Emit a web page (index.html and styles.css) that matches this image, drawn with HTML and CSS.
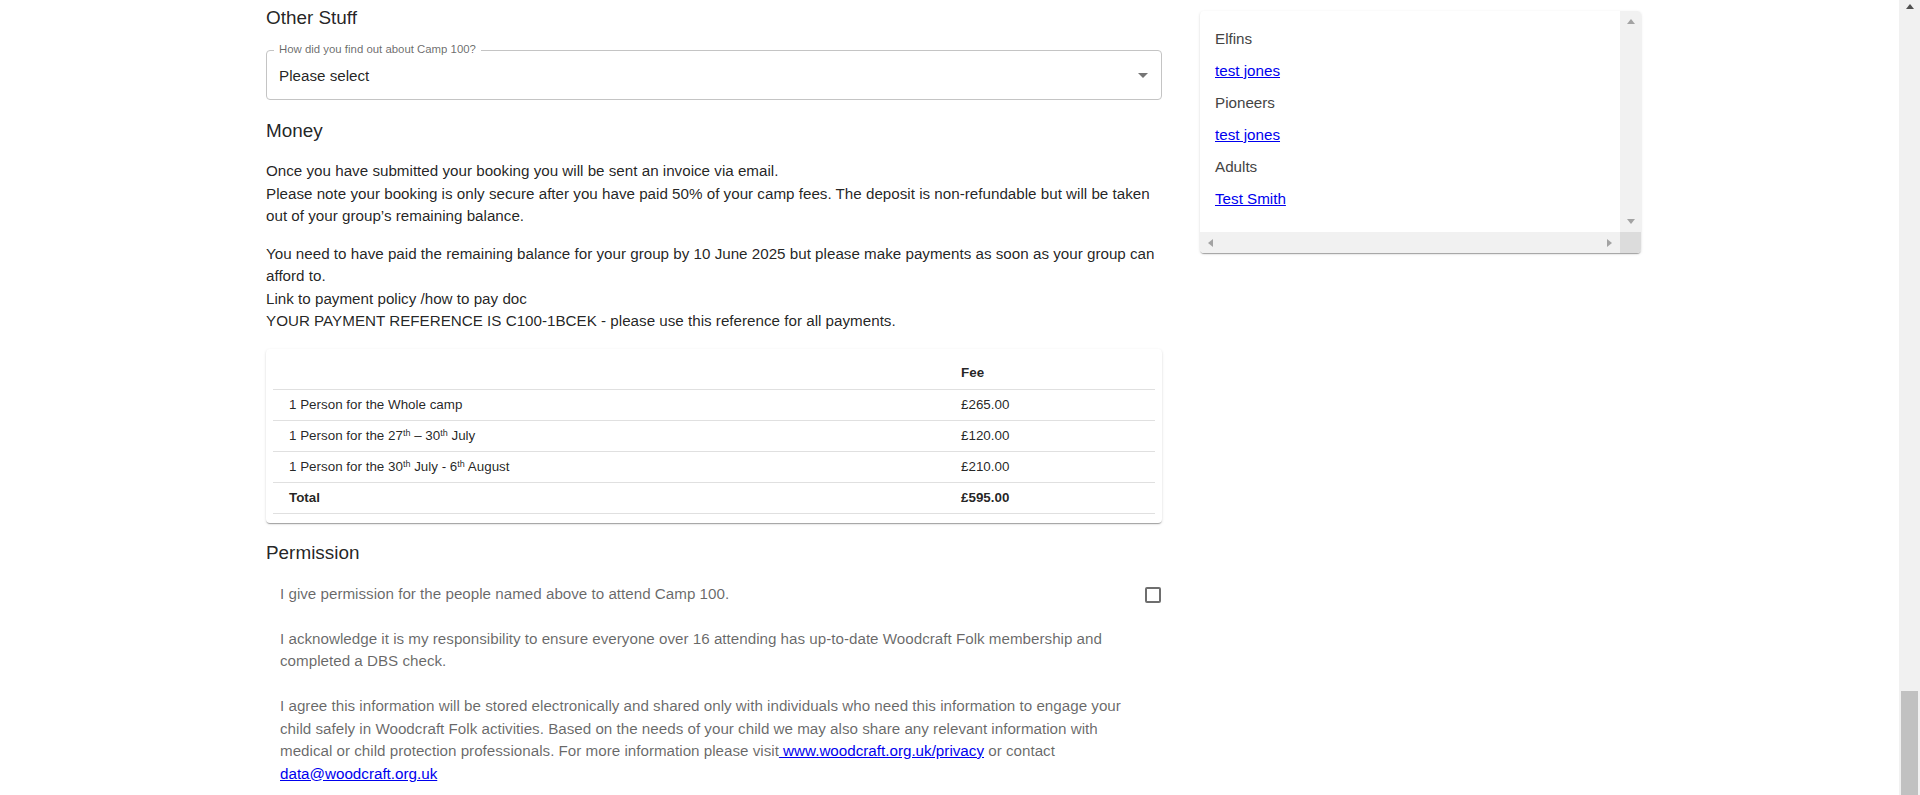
FILE: index.html
```html
<!DOCTYPE html>
<html lang="en">
<head>
<meta charset="utf-8">
<title>Camp 100 booking</title>
<link rel="stylesheet" href="styles.css">
</head>
<body>
<div class="page">
  <div class="viewport">
    <div class="layout">
      <main class="col-main">
        <h6 class="heading h-other">Other Stuff</h6>
        <div class="field">
          <span class="field-label">How did you find out about Camp 100?</span>
          <span class="field-value">Please select</span>
          <span class="field-arrow"></span>
        </div>

        <h6 class="heading h-money">Money</h6>
        <p class="text p1">Once you have submitted your booking you will be sent an invoice via email.<br>Please note your booking is only secure after you have paid 50% of your camp fees. The deposit is non-refundable but will be taken out of your group’s remaining balance.</p>
        <p class="text p2">You need to have paid the remaining balance for your group by 10 June 2025 but please make payments as soon as your group can afford to.<br>Link to payment policy /how to pay doc<br>YOUR PAYMENT REFERENCE IS C100-1BCEK - please use this reference for all payments.</p>

        <div class="card">
          <table class="fees">
            <colgroup><col><col class="col-fee"></colgroup>
            <thead>
              <tr><th></th><th>Fee</th></tr>
            </thead>
            <tbody>
              <tr><td>1 Person for the Whole camp</td><td>£265.00</td></tr>
              <tr><td>1 Person for the 27<sup>th</sup> – 30<sup>th</sup> July</td><td>£120.00</td></tr>
              <tr><td>1 Person for the 30<sup>th</sup> July - 6<sup>th</sup> August</td><td>£210.00</td></tr>
              <tr class="total"><td>Total</td><td>£595.00</td></tr>
            </tbody>
          </table>
        </div>

        <h6 class="heading h-perm">Permission</h6>
        <div class="perm">
          <div class="perm-text">
            <p>I give permission for the people named above to attend Camp 100.</p>
            <p>I acknowledge it is my responsibility to ensure everyone over 16 attending has up-to-date Woodcraft Folk membership and completed a DBS check.</p>
            <p>I agree this information will be stored electronically and shared only with individuals who need this information to engage your child safely in Woodcraft Folk activities. Based on the needs of your child we may also share any relevant information with medical or child protection professionals. For more information please visit<a href="#"> www.woodcraft.org.uk/privacy</a> or contact <a href="#">data@woodcraft.org.uk</a></p>
          </div>
          <div class="perm-check"><span class="checkbox"></span></div>
        </div>
      </main>

      <aside class="col-side">
        <div class="panel">
          <div class="panel-body">
            <div class="panel-content">
              <p class="group">Elfins</p>
              <p><a href="#">test jones</a></p>
              <p class="group">Pioneers</p>
              <p><a href="#">test jones</a></p>
              <p class="group">Adults</p>
              <p><a href="#">Test Smith</a></p>
            </div>
            <div class="vbar">
              <span class="sb-btn"><span class="tri tri-up"></span></span>
              <span class="sb-btn"><span class="tri tri-down"></span></span>
            </div>
          </div>
          <div class="hrow">
            <div class="hbar">
              <span class="sb-btn"><span class="tri tri-left"></span></span>
              <span class="sb-btn"><span class="tri tri-right"></span></span>
            </div>
            <div class="corner"></div>
          </div>
        </div>
      </aside>
    </div>
  </div>
  <div class="page-scroll">
    <span class="ps-up"></span>
    <span class="ps-track"></span>
    <span class="ps-thumb"></span>
  </div>
</div>
</body>
</html>
```

FILE: styles.css
```css
* { box-sizing: border-box; }
html, body { margin: 0; height: 100%; overflow: hidden; }
body {
  font-family: "Liberation Sans", Arial, sans-serif;
  background: #fff;
  color: rgba(0, 0, 0, 0.87);
}
.page { display: flex; height: 795px; }
.viewport { flex: 1; overflow: hidden; }
.layout {
  display: flex;
  align-items: flex-start;
  gap: 38px;
  padding-left: 266px;
}
.col-main { width: 896px; flex: none; }
.col-side { width: 441px; flex: none; padding-top: 11px; }

.heading {
  font-size: 18.9px;
  line-height: 30px;
  font-weight: 400;
  margin: 0;
}
.h-other { margin-top: 3px; }
.h-money { margin-top: 16px; }
.h-perm { margin-top: 14.5px; }

.field {
  position: relative;
  margin-top: 17px;
  height: 50px;
  border: 1px solid #c4c4c4;
  border-radius: 4px;
  display: flex;
  align-items: center;
  justify-content: space-between;
  padding: 1px 13px 0 12px;
}
.field-label {
  position: absolute;
  left: 7px;
  top: -8px;
  padding: 0 5px;
  font-size: 11.4px;
  line-height: 13px;
  background: #fff;
  color: rgba(0, 0, 0, 0.6);
}
.field-value { font-size: 15.2px; line-height: 17px; }
.field-arrow {
  width: 0;
  height: 0;
  border-left: 5px solid transparent;
  border-right: 5px solid transparent;
  border-top: 5px solid #757575;
}

.text { font-size: 15.2px; line-height: 22.5px; margin: 0; }
.p1 { margin-top: 14px; }
.p2 { margin-top: 15px; }

.card {
  margin-top: 16.5px;
  background: #fff;
  border-radius: 4px;
  padding: 8px 7px 9px;
  box-shadow: 0 2px 1px -1px rgba(0,0,0,0.2), 0 1px 1px 0 rgba(0,0,0,0.14), 0 1px 3px 0 rgba(0,0,0,0.12);
}
.fees {
  width: 100%;
  border-collapse: collapse;
  font-size: 13.4px;
  color: rgba(0, 0, 0, 0.87);
}
.col-fee { width: 210px; }
.fees th, .fees td {
  text-align: left;
  padding: 6px 16px;
  border-bottom: 1px solid #e0e0e0;
  line-height: 18px;
}
.fees th { font-weight: 700; line-height: 20px; }
.fees sup { font-size: 9px; line-height: 0; vertical-align: 4px; }
.total td { font-weight: 700; }

.perm {
  margin-top: 15px;
  display: flex;
  align-items: flex-start;
  padding-left: 14px;
}
.perm-text {
  flex: 1;
  font-size: 15.2px;
  line-height: 22.5px;
  color: rgba(0, 0, 0, 0.6);
}
.perm-text p { margin: 0 0 22.5px; }
.perm-text p:last-child { margin-bottom: 0; }
.perm-text a { color: #0000ee; }
.perm-check { width: 29px; flex: none; padding: 4.5px 0 0 12px; }
.checkbox {
  display: block;
  width: 16px;
  height: 16px;
  border: 2px solid #6e6e6e;
  border-radius: 2px;
}

.panel {
  width: 441px;
  background: #fff;
  border-radius: 4px;
  overflow: hidden;
  box-shadow: 0 2px 1px -1px rgba(0,0,0,0.2), 0 1px 1px 0 rgba(0,0,0,0.14), 0 1px 3px 0 rgba(0,0,0,0.12);
}
.panel-body { display: flex; height: 221px; }
.panel-content {
  flex: 1;
  padding: 3.5px 15px 0;
  font-size: 15.2px;
  overflow: hidden;
}
.panel-content p { margin: 15px 0; line-height: normal; }
.panel-content .group { color: #444; }
.panel-content a { color: #0000ee; }
.vbar {
  width: 21px;
  flex: none;
  background: #f1f1f1;
  display: flex;
  flex-direction: column;
  justify-content: space-between;
}
.hrow { display: flex; height: 21px; }
.hbar {
  flex: 1;
  background: #f1f1f1;
  display: flex;
  justify-content: space-between;
}
.corner { width: 21px; background: #dcdcdc; }
.sb-btn {
  width: 21px;
  height: 21px;
  display: flex;
  align-items: center;
  justify-content: center;
}
.tri { width: 0; height: 0; }
.tri-up { border-left: 4.5px solid transparent; border-right: 4.5px solid transparent; border-bottom: 5px solid #a3a3a3; }
.tri-down { border-left: 4.5px solid transparent; border-right: 4.5px solid transparent; border-top: 5px solid #a3a3a3; }
.tri-left { border-top: 4.5px solid transparent; border-bottom: 4.5px solid transparent; border-right: 5px solid #a3a3a3; }
.tri-right { border-top: 4.5px solid transparent; border-bottom: 4.5px solid transparent; border-left: 5px solid #a3a3a3; }

.page-scroll {
  width: 21px;
  flex: none;
  background: #f1f1f1;
  display: flex;
  flex-direction: column;
  align-items: center;
}
.ps-up {
  margin-top: 4px;
  width: 0;
  height: 0;
  border-left: 4.5px solid transparent;
  border-right: 4.5px solid transparent;
  border-bottom: 5px solid #505050;
}
.ps-track { flex: 1; }
.ps-thumb { width: 17px; height: 104px; background: #c1c1c1; }
```
